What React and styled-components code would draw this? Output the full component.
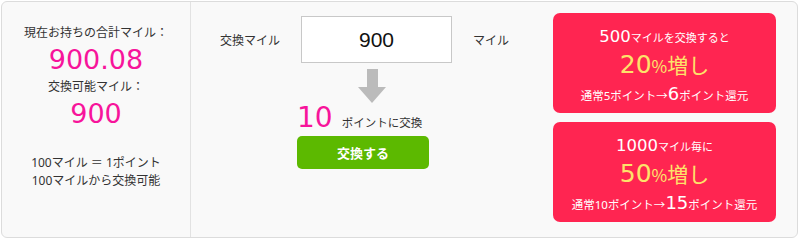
import React from "react";
import styled, { createGlobalStyle } from "styled-components";

const Global = createGlobalStyle`
  html, body { margin: 0; padding: 0; background: #fff; }
  body { font-family: "Noto Sans", "Noto Sans CJK JP", sans-serif; color: #333; }
`;

const Frame = styled.div`
  box-sizing: border-box;
  margin: 1px 0 0 1px;
  width: 797px;
  height: 237px;
  border: 1px solid #dcdcdc;
  border-radius: 6px;
  background: #f9f9f9;
  display: grid;
  grid-template-columns: 189px 1fr 245px;
  overflow: hidden;
`;

const Summary = styled.div`
  border-right: 1px solid #e2e2e2;
  display: flex;
  flex-direction: column;
  align-items: center;
  padding-top: 22px;
`;

const Label = styled.div`
  font-size: 12px;
  line-height: 18px;
  color: #333;
  white-space: nowrap;
`;

const BigPink = styled.div`
  font-family: "DejaVu Sans", "Noto Sans", sans-serif;
  font-size: 27px;
  line-height: 36px;
  color: #f7149b;
`;

const Note = styled.div`
  margin-top: 22px;
  font-size: 12px;
  line-height: 18px;
  text-align: center;
  white-space: nowrap;
`;

const Exchange = styled.div`
  padding: 14px 0 0 29px;
  display: flex;
  flex-direction: column;
`;

const InputRow = styled.div`
  display: flex;
  align-items: center;
`;

const RowLabel = styled.div`
  width: 81px;
  font-size: 12px;
  color: #333;
`;

const Field = styled.div`
  box-sizing: border-box;
  width: 151px;
  height: 47px;
  background: #fff;
  border: 1px solid #c8c8c8;
  display: flex;
  align-items: center;
  justify-content: center;
  font-family: "Liberation Sans", Arial, sans-serif;
  font-size: 21px;
  color: #111;
`;

const Unit = styled.div`
  margin-left: 21px;
  font-size: 12px;
`;

const Result = styled.div`
  margin-left: 77px;
  display: flex;
  flex-direction: column;
  align-items: flex-start;
`;

const Arrow = styled.svg`
  display: block;
  margin: 6px 0 0 61px;
`;

const PointsRow = styled.div`
  display: flex;
  align-items: baseline;
  height: 32px;
  margin-top: -1px;
`;

const PointsNum = styled.span`
  font-family: "DejaVu Sans", "Noto Sans", sans-serif;
  font-size: 28px;
  line-height: 32px;
  color: #f7149b;
`;

const PointsText = styled.span`
  margin-left: 9px;
  font-size: 11.5px;
`;

const Button = styled.button`
  margin-top: 2px;
  width: 132px;
  height: 33px;
  border: none;
  border-radius: 5px;
  background: #5cb900;
  color: #fff;
  font-family: "Noto Sans CJK JP", sans-serif;
  font-weight: 700;
  font-size: 13px;
  cursor: pointer;
`;

const Offers = styled.div`
  display: flex;
  flex-direction: column;
  gap: 9px;
  padding: 11px 21px 0 0;
  align-items: flex-end;
`;

const Card = styled.div`
  box-sizing: border-box;
  width: 223px;
  height: 100px;
  padding-top: 14px;
  border-radius: 7px;
  background: #ff2551;
  color: #fff;
  display: flex;
  flex-direction: column;
  align-items: center;
`;

const CardLine = styled.div`
  white-space: nowrap;
  font-size: ${(p) => p.$fs || "11px"};
  line-height: ${(p) => p.$lh};
  height: ${(p) => p.$lh};
  color: ${(p) => (p.$yellow ? "#fde36a" : "#fff")};
`;

const Num = styled.span`
  font-family: "DejaVu Sans", "Noto Sans", sans-serif;
  font-size: ${(p) => p.$size};
`;

const Big = styled.span`
  font-family: "Noto Sans CJK JP", sans-serif;
  font-size: ${(p) => p.$size};
`;

const Offer = ({ amount, tail, pct, from, to }) => (
  <Card>
    <CardLine $lh="20px">
      <Num $size="16.5px">{amount}</Num>
      {tail}
    </CardLine>
    <CardLine $yellow $lh="34px">
      <Num $size="25px">{pct}</Num>
      <Big $size="17px">%</Big>
      <Big $size="21px">増し</Big>
    </CardLine>
    <CardLine $lh="26px" $fs="11.5px">
      通常{from}ポイント→<Num $size="18px">{to}</Num>ポイント還元
    </CardLine>
  </Card>
);

export default function App() {
  return (
    <>
      <Global />
      <Frame>
        <Summary>
          <Label>現在お持ちの合計マイル：</Label>
          <BigPink>900.08</BigPink>
          <Label>交換可能マイル：</Label>
          <BigPink>900</BigPink>
          <Note>
            100マイル ＝ 1ポイント
            <br />
            100マイルから交換可能
          </Note>
        </Summary>
        <Exchange>
          <InputRow>
            <RowLabel>交換マイル</RowLabel>
            <Field>900</Field>
            <Unit>マイル</Unit>
          </InputRow>
          <Result>
            <Arrow width="28" height="34" viewBox="0 0 28 34">
              <path d="M9 0h11v18h8L14 34 0 18h9z" fill="#bbbbbb" />
            </Arrow>
            <PointsRow>
              <PointsNum>10</PointsNum>
              <PointsText>ポイントに交換</PointsText>
            </PointsRow>
            <Button>交換する</Button>
          </Result>
        </Exchange>
        <Offers>
          <Offer amount="500" tail="マイルを交換すると" pct="20" from="5" to="6" />
          <Offer amount="1000" tail="マイル毎に" pct="50" from="10" to="15" />
        </Offers>
      </Frame>
    </>
  );
}
